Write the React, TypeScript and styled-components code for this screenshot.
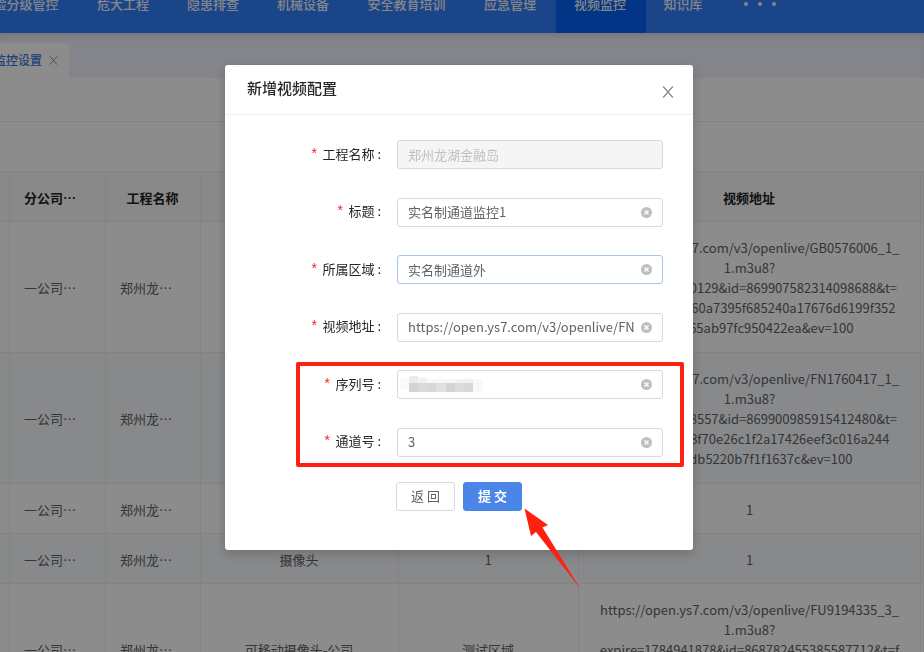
import React from "react";
import styled, { createGlobalStyle, css } from "styled-components";

const GlobalStyle = createGlobalStyle`
  * { box-sizing: border-box; }
  html, body { margin: 0; overflow: hidden; }
  body, button, input {
    font-family: "Noto Sans CJK SC", "Noto Sans", sans-serif;
    font-size: 13px;
    line-height: 20px;
  }
`;

const Page = styled.div`
  height: 100vh;
  overflow: hidden;
  background: #fff;
  color: #606266;
`;

const Header = styled.header`
  position: relative;
  z-index: 1;
  height: 33px;
  overflow: hidden;
  background: #317ff9;
`;

const Nav = styled.nav`
  display: flex;
  height: 100%;
  align-items: flex-end;
  margin-left: -38px;
`;

const NavItem = styled.a<{ $width: number; $active?: boolean }>`
  flex: 0 0 ${(p) => p.$width}px;
  height: 58px;
  padding-right: 2px;
  line-height: 58px;
  text-align: center;
  text-decoration: none;
  font-weight: 500;
  color: #f2f5fa;
  background: ${(p) => (p.$active ? "#0462f4" : "transparent")};
`;

const MoreButton = styled.button`
  display: flex;
  flex: 0 0 76px;
  height: 58px;
  align-items: center;
  justify-content: center;
  gap: 10px;
  padding: 0;
  border: 0;
  background: none;
`;

const Dot = styled.span`
  width: 4px;
  height: 4px;
  border-radius: 50%;
  background: #f2f5fa;
`;

const TabStrip = styled.div`
  display: flex;
  align-items: flex-end;
  height: 45px;
  background: #f0f2fb;
  box-shadow: inset 0 6px 8px -4px rgba(0, 0, 0, 0.14);
`;

const Tab = styled.div`
  display: flex;
  align-items: center;
  justify-content: flex-end;
  gap: 7px;
  width: 69px;
  height: 35px;
  padding: 0 11px 1px 0;
  border-radius: 0 3px 0 0;
  background: #fff;
  overflow: hidden;
`;

const TabLink = styled.a`
  flex: none;
  font-size: 12px;
  font-weight: 500;
  color: #3b76dd;
  text-decoration: none;
`;

const IconButton = styled.button<{ $color: string }>`
  display: flex;
  flex: none;
  padding: 0;
  border: 0;
  background: none;
  color: ${(p) => p.$color};
  cursor: pointer;
`;

const FilterBar = styled.div`
  height: 44px;
  border-bottom: 1px solid #ebebeb;
`;

const Toolbar = styled.div`
  height: 49px;
`;

const Table = styled.table`
  width: 100%;
  table-layout: fixed;
  border-collapse: separate;
  border-spacing: 0;
  border-top: 1px solid #efefef;
`;

const Col = styled.col<{ $width?: number }>`
  ${(p) => p.$width && css`width: ${p.$width}px;`}
`;

const cell = css<{ $align?: string }>`
  height: 50px;
  padding: 15px 15px 13px 14px;
  text-align: ${(p) => p.$align ?? "center"};
  border-right: 1px solid #efefef;
  border-bottom: 1px solid #efefef;
`;

const EdgeCell = styled.td`
  padding: 0;
  border-right: 1px solid #efefef;
  border-bottom: 1px solid #efefef;
`;

const HeadCell = styled.th<{ $align?: string }>`
  ${cell}
  font-weight: 700;
  color: #222;
`;

const BodyCell = styled.td<{ $align?: string }>`
  ${cell}
`;

const AddressCell = styled(BodyCell)<{ $long: boolean }>`
  padding: ${(p) => (p.$long ? "16px 8px 14px" : "15px 8px 13px")};
`;

const Line = styled.div`
  white-space: nowrap;
`;

const HeadRow = styled.tr`
  background: #fafafa;
`;

const BodyRow = styled.tr<{ $striped: boolean }>`
  background: ${(p) => (p.$striped ? "#f8fafd" : "#fff")};
`;

const Overlay = styled.div`
  position: fixed;
  inset: 0;
  z-index: 10;
  display: flex;
  justify-content: center;
  align-items: flex-start;
  padding: 65px 6px 0 0;
  background: rgba(0, 0, 0, 0.45);
`;

const Dialog = styled.section`
  position: relative;
  width: 468px;
  border-radius: 3px;
  background: #fff;
  box-shadow: 0 4px 12px rgba(0, 0, 0, 0.2);
`;

const DialogHeader = styled.div`
  display: flex;
  align-items: flex-start;
  justify-content: space-between;
  height: 50px;
  padding: 0 19px 0 22px;
  border-bottom: 1px solid #efefef;
`;

const DialogTitle = styled.h2`
  margin: 0;
  font-size: 15px;
  line-height: 46px;
  font-weight: 500;
  color: #262626;
`;

const CloseButton = styled(IconButton)`
  padding-top: 21px;
`;

const Form = styled.form`
  padding: 25px 30px 39px 0;
`;

const Fields = styled.div`
  display: flex;
  flex-direction: column;
  justify-content: space-between;
  min-height: 317px;
`;

const Field = styled.div`
  display: grid;
  grid-template-columns: 1fr 266px;
  column-gap: 16px;
  align-items: center;
`;

const Label = styled.label`
  display: flex;
  justify-content: flex-end;
  gap: 4px;
  color: #262626;
`;

const Required = styled.span`
  font-family: "Liberation Mono", monospace;
  font-size: 14px;
  line-height: 22px;
  color: #f5222d;
`;

const Control = styled.div<{ $disabled?: boolean; $focused?: boolean }>`
  position: relative;
  display: flex;
  align-items: center;
  gap: 6px;
  height: 29px;
  padding: 0 10px;
  border: 1px solid ${(p) => (p.$focused ? "#a9c3ea" : "#d9d9d9")};
  border-radius: 3px;
  background: ${(p) => (p.$disabled ? "#f5f5f5" : "#fff")};
`;

const TextInput = styled.input`
  flex: 1;
  min-width: 0;
  padding: 0;
  border: 0;
  outline: 0;
  background: none;
  color: #606266;
  &:disabled { color: #bfbfbf; }
`;

const Mosaic = styled.svg`
  position: absolute;
  left: 2px;
  top: 4px;
`;

const Actions = styled.div`
  display: flex;
  gap: 8px;
  margin: 25px 0 0 171px;
`;

const Button = styled.button<{ $primary?: boolean }>`
  width: 59px;
  height: 29px;
  padding: 0 0 2px;
  border: 1px solid ${(p) => (p.$primary ? "#4a86e8" : "#d9d9d9")};
  border-radius: 3px;
  background: ${(p) => (p.$primary ? "#4a86e8" : "#fff")};
  color: ${(p) => (p.$primary ? "#fff" : "#606266")};
  font-weight: ${(p) => (p.$primary ? 700 : 400)};
`;

const Highlight = styled.div`
  position: absolute;
  left: 71px;
  top: 297px;
  width: 388px;
  height: 105px;
  border: 4px solid #ff2012;
  border-radius: 2px;
  pointer-events: none;
`;

const Arrow = styled.svg`
  position: absolute;
  left: 299px;
  top: 443px;
  pointer-events: none;
`;

const Cross = ({ size }: { size: number }) => (
  <svg width={size} height={size} viewBox="0 0 12 12" fill="none" stroke="currentColor" strokeWidth="1.3">
    <path d="M1.2 0.5 10.8 11.5M10.8 0.5 1.2 11.5" />
  </svg>
);

const ClearIcon = () => (
  <svg width="11" height="11" viewBox="0 0 11 11">
    <circle cx="5.5" cy="5.5" r="5.5" fill="currentColor" />
    <path d="M3.5 3.5 7.5 7.5M7.5 3.5 3.5 7.5" stroke="#fff" strokeWidth="1.2" />
  </svg>
);

const navItems = [
  { text: "风险分级管控", width: 117 },
  { text: "危大工程", width: 90 },
  { text: "隐患排查", width: 90 },
  { text: "机械设备", width: 90 },
  { text: "安全教育培训", width: 117 },
  { text: "应急管理", width: 90 },
  { text: "视频监控", width: 90, active: true },
  { text: "知识库", width: 76 },
];

const rows = [
  {
    name: "",
    area: "",
    address: [
      "https://open.ys7.com/v3/openlive/GB0576006_1_",
      "1.m3u8?",
      "expire=1784910129&id=869907582314098688&t=",
      "a3c5e4d09b8260a7395f685240a17676d6199f352",
      "7d0e1c65ab97fc950422ea&ev=100",
    ],
  },
  {
    name: "",
    area: "",
    address: [
      "https://open.ys7.com/v3/openlive/FN1760417_1_",
      "1.m3u8?",
      "expire=1784908557&id=869900985915412480&t=",
      "b27d5a09c398f70e26c1f2a17426eef3c016a244",
      "0c93e4db5220b7f1f1637c&ev=100",
    ],
  },
  { name: "", area: "", address: ["1"] },
  { name: "摄像头", area: "1", address: ["1"] },
  {
    name: "可移动摄像头-公司",
    area: "测试区域",
    address: [
      "https://open.ys7.com/v3/openlive/FU9194335_3_",
      "1.m3u8?",
      "expire=1784941878&id=868782455385587712&t=f",
      "4e81b7c09d2a6f35c8e71d04ab96f2358d",
      "71c0a9e2d45b86f3170cae&ev=100",
    ],
  },
];

const fields = [
  { id: "project", label: "工程名称", value: "郑州龙湖金融岛", disabled: true },
  { id: "title", label: "标题", value: "实名制通道监控1" },
  { id: "area", label: "所属区域", value: "实名制通道外", focused: true },
  { id: "address", label: "视频地址", value: "https://open.ys7.com/v3/openlive/FN1760417" },
  { id: "serial", label: "序列号", value: "", masked: true },
  { id: "channel", label: "通道号", value: "3" },
];

const mosaicBlocks: [number, number, number, number, string][] = [
  [0, 3, 9, 11, "#fafafa"],
  [9, 1, 9, 8, "#ececec"],
  [18, 3, 9, 6, "#f1f1f1"],
  [27, 4, 28, 5, "#f7f7f7"],
  [55, 4, 18, 5, "#f1f1f1"],
  [9, 8, 9, 9, "#d3d3d3"],
  [18, 8, 9, 9, "#dadada"],
  [27, 8, 9, 9, "#d8d8d8"],
  [36, 8, 10, 9, "#e1e1e1"],
  [46, 8, 9, 9, "#d4d4d4"],
  [55, 8, 9, 9, "#dcdcdc"],
  [64, 8, 9, 9, "#d8d8d8"],
  [73, 4, 9, 13, "#f8f8f8"],
];

export default function App() {
  return (
    <>
      <GlobalStyle />
      <Page>
        <Header>
          <Nav>
            {navItems.map((item) => (
              <NavItem key={item.text} href="#" $width={item.width} $active={item.active}>
                {item.text}
              </NavItem>
            ))}
            <MoreButton aria-label="更多">
              <Dot />
              <Dot />
              <Dot />
            </MoreButton>
          </Nav>
        </Header>
        <TabStrip>
          <Tab>
            <TabLink href="#">监控设置</TabLink>
            <IconButton $color="#8c8c8c" aria-label="关闭标签">
              <Cross size={9} />
            </IconButton>
          </Tab>
        </TabStrip>
        <FilterBar />
        <Toolbar />
        <Table>
          <colgroup>
            <Col $width={10} />
            <Col $width={96} />
            <Col $width={95} />
            <Col $width={198} />
            <Col $width={180} />
            <Col />
            <Col $width={3} />
          </colgroup>
          <thead>
            <HeadRow>
              <EdgeCell />
              <HeadCell $align="left">分公司…</HeadCell>
              <HeadCell>工程名称</HeadCell>
              <HeadCell />
              <HeadCell />
              <HeadCell>视频地址</HeadCell>
              <EdgeCell />
            </HeadRow>
          </thead>
          <tbody>
            {rows.map((row, i) => (
              <BodyRow key={i} $striped={i % 2 === 1}>
                <EdgeCell />
                <BodyCell $align="left">一公司…</BodyCell>
                <BodyCell $align="left">郑州龙…</BodyCell>
                <BodyCell>{row.name}</BodyCell>
                <BodyCell>{row.area}</BodyCell>
                <AddressCell $long={row.address.length > 1}>
                  {row.address.map((line) => (
                    <Line key={line}>{line}</Line>
                  ))}
                </AddressCell>
                <EdgeCell />
              </BodyRow>
            ))}
          </tbody>
        </Table>
      </Page>
      <Overlay>
        <Dialog role="dialog" aria-labelledby="dialog-title">
          <DialogHeader>
            <DialogTitle id="dialog-title">新增视频配置</DialogTitle>
            <CloseButton $color="#8c8c8c" aria-label="关闭">
              <Cross size={12} />
            </CloseButton>
          </DialogHeader>
          <Form onSubmit={(e) => e.preventDefault()}>
            <Fields>
              {fields.map((f) => (
                <Field key={f.id}>
                  <Label htmlFor={f.id}>
                    <Required>*</Required>
                    <span>{f.label} :</span>
                  </Label>
                  <Control $disabled={f.disabled} $focused={f.focused}>
                    <TextInput id={f.id} defaultValue={f.value} disabled={f.disabled} />
                    {f.masked && (
                      <Mosaic width="86" height="19" aria-hidden="true">
                        {mosaicBlocks.map(([x, y, w, h, fill], i) => (
                          <rect key={i} x={x} y={y} width={w} height={h} fill={fill} />
                        ))}
                      </Mosaic>
                    )}
                    {!f.disabled && (
                      <IconButton type="button" $color="#bfbfbf" aria-label="清除">
                        <ClearIcon />
                      </IconButton>
                    )}
                  </Control>
                </Field>
              ))}
            </Fields>
            <Actions>
              <Button type="button">返 回</Button>
              <Button type="submit" $primary>提 交</Button>
            </Actions>
          </Form>
          <Highlight />
          <Arrow width="57" height="82" viewBox="0 0 57 82" aria-hidden="true">
            <path d="M0.5 0.5 24 17 18.5 19.5 56.5 81 12 24 7 28Z" fill="#ff2012" />
          </Arrow>
        </Dialog>
      </Overlay>
    </>
  );
}
